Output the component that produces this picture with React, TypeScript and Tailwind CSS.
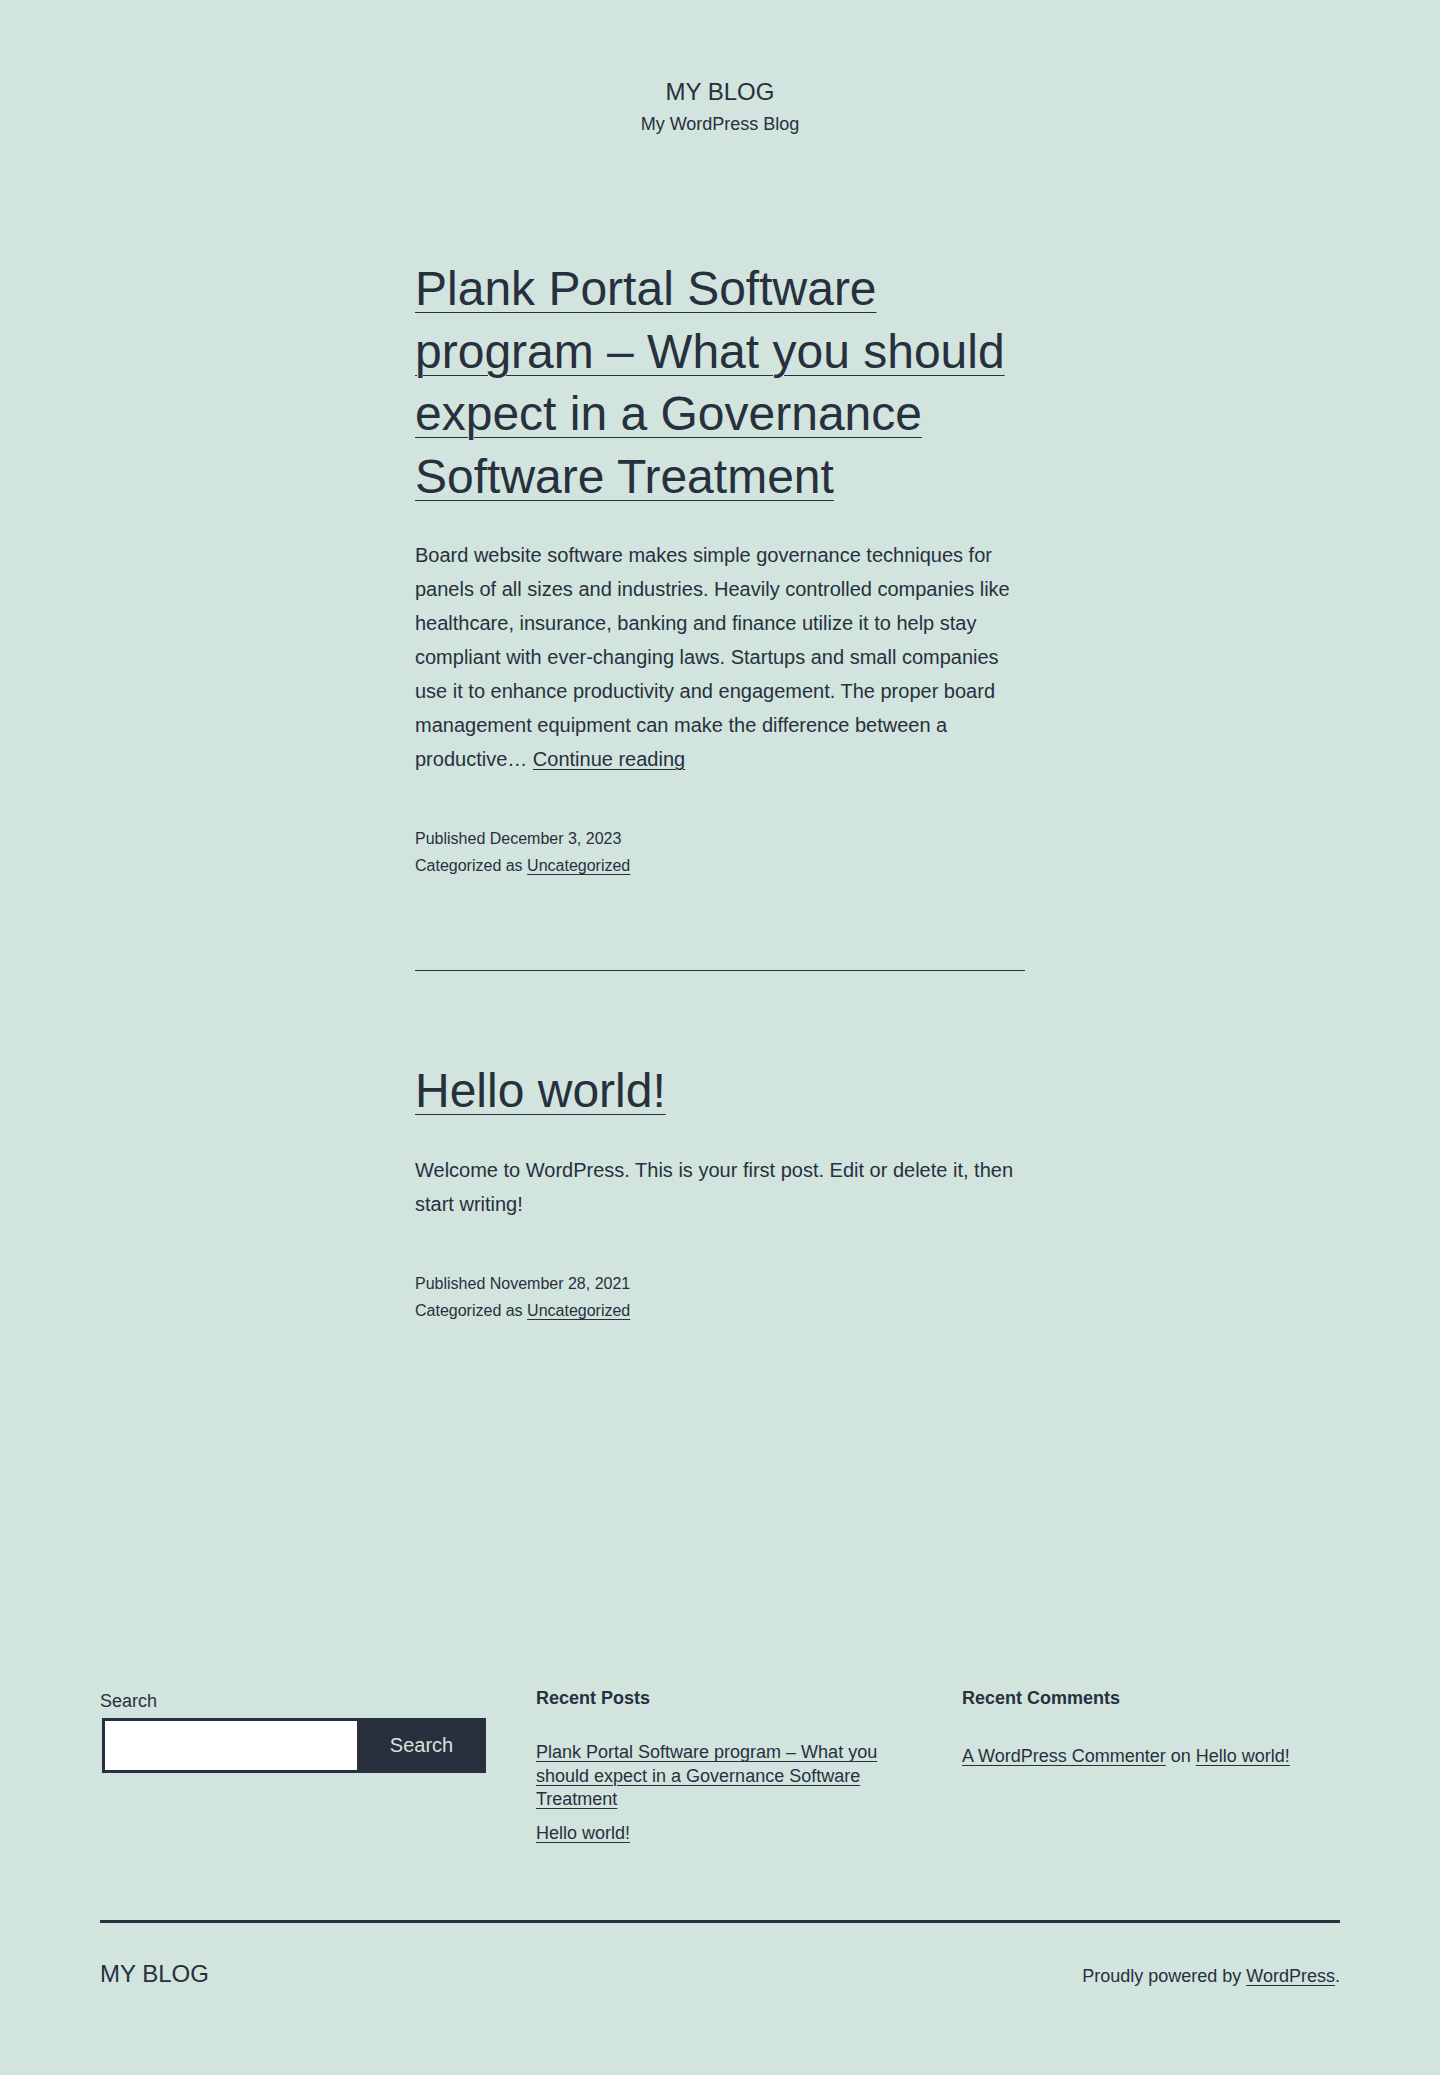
const posts = [
  {
    title:
      "Plank Portal Software program – What you should expect in a Governance Software Treatment",
    excerpt:
      "Board website software makes simple governance techniques for panels of all sizes and industries. Heavily controlled companies like healthcare, insurance, banking and finance utilize it to help stay compliant with ever-changing laws. Startups and small companies use it to enhance productivity and engagement. The proper board management equipment can make the difference between a productive…",
    more: true,
    date: "December 3, 2023",
  },
  {
    title: "Hello world!",
    excerpt:
      "Welcome to WordPress. This is your first post. Edit or delete it, then start writing!",
    more: false,
    date: "November 28, 2021",
  },
];

const linkCls = "underline decoration-1 underline-offset-[3px]";

const PostEntry = ({ post, first }: { post: (typeof posts)[number]; first: boolean }) => {
  return (
    <article>
      <h2
        className={
          (first ? "mt-[121px]" : "mt-[89px]") +
          " text-[48px] leading-[62.4px] font-normal"
        }
      >
        <a href="#" className="underline decoration-1 underline-offset-[0.15em]">
          {post.title}
        </a>
      </h2>
      <p className="mt-[30px] text-[20px] leading-[34px]">
        {post.excerpt}
        {post.more && (
          <>
            {" "}
            <a href="#" className={linkCls}>
              Continue reading
            </a>
          </>
        )}
      </p>
      <footer className="mt-[49px] text-[16px] leading-[27.2px]">
        <span className="block">Published {post.date}</span>
        <span className="block">
          Categorized as{" "}
          <a href="#" className={linkCls}>
            Uncategorized
          </a>
        </span>
      </footer>
    </article>
  );
};

export default function App() {
  return (
    <div className="min-h-[2075px] bg-[#d1e4dd] text-[#28303d] font-['Liberation_Sans',Arial,sans-serif]">
      <header className="pt-[76px] text-center">
        <p className="text-[24px] leading-[31.2px] uppercase">My Blog</p>
        <p className="mt-[5px] text-[18px] leading-[25.2px]">My WordPress Blog</p>
      </header>

      <main className="mx-auto w-[610px]">
        <PostEntry post={posts[0]} first />
        <hr className="mt-[91px] h-px border-0 bg-[#28303d]" />
        <PostEntry post={posts[1]} first={false} />
      </main>

      <div className="mx-[100px]">
        <section className="mt-[363px] grid grid-cols-[386px_376px_378px] gap-x-[50px] items-start">
          <div className="pt-[3px]">
            <label className="block text-[18px] leading-[23.4px]">Search</label>
            <form className="mt-[4px] ml-[2px] flex h-[55px] w-[384px]" onSubmit={(e) => e.preventDefault()}>
              <input
                type="search"
                className="w-[255px] shrink-0 border-[3px] border-r-0 border-[#28303d] bg-white outline-none"
              />
              <button
                type="submit"
                className="flex-1 bg-[#28303d] text-[20px] text-[#d1e4dd]"
              >
                Search
              </button>
            </form>
          </div>

          <div>
            <h2 className="text-[18px] leading-[23.4px] font-bold">Recent Posts</h2>
            <ul className="mt-[30.6px] text-[18px] leading-[23.4px]">
              <li>
                <a href="#" className={linkCls}>
                  Plank Portal Software program – What you should expect in a Governance Software Treatment
                </a>
              </li>
              <li className="mt-[11px]">
                <a href="#" className={linkCls}>
                  Hello world!
                </a>
              </li>
            </ul>
          </div>

          <div>
            <h2 className="text-[18px] leading-[23.4px] font-bold">Recent Comments</h2>
            <ul className="mt-[30.6px] text-[18px] leading-[30.6px]">
              <li>
                <a href="#" className={linkCls}>
                  A WordPress Commenter
                </a>{" "}
                on{" "}
                <a href="#" className={linkCls}>
                  Hello world!
                </a>
              </li>
            </ul>
          </div>
        </section>

        <footer className="mt-[74px] border-t-[3px] border-[#28303d] pb-[86px]">
          <div className="mt-[35px] flex items-baseline justify-between">
            <p className="text-[24px] leading-[31.2px] uppercase">My Blog</p>
            <p className="text-[18px] leading-[25.2px]">
              Proudly powered by{" "}
              <a href="#" className={linkCls}>
                WordPress
              </a>
              .
            </p>
          </div>
        </footer>
      </div>
    </div>
  );
}
